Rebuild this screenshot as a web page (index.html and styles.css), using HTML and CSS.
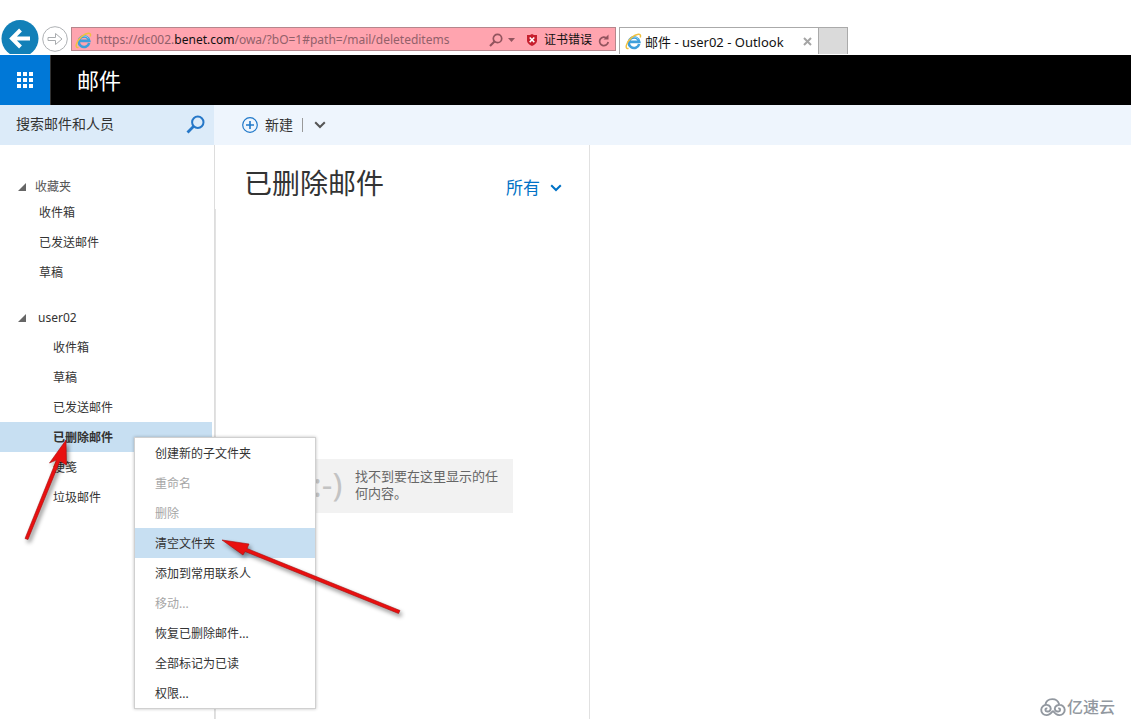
FILE: index.html
```html
<!DOCTYPE html>
<html lang="zh-CN">
<head>
<meta charset="utf-8">
<title>邮件 - user02 - Outlook</title>
<link rel="stylesheet" href="styles.css">
</head>
<body>
<svg class="defs" width="0" height="0" aria-hidden="true">
  <symbol id="ie" viewBox="0 0 17 17">
    <path d="M14.200 11A5.300 5.300 0 1 1 14.300 8.900H5" fill="none" stroke="#3d9fdc" stroke-width="2.600"/>
    <path d="M13.300 6.500A5 5 0 0 0 4.500 6.500" fill="none" stroke="#8ad4f5" stroke-width="1"/>
    <path d="M3.500 15.200C-0.500 16.800 0.800 9.600 6.500 4.600C11.300 0.500 16.800-0.200 15.300 4.400" fill="none" stroke="#efc040" stroke-width="1.500"/>
  </symbol>
  <symbol id="chevron" viewBox="0 0 12 8">
    <path d="M1.200 1.200L6 6L10.800 1.200" fill="none" stroke="currentColor" stroke-width="2"/>
  </symbol>
</svg>

<div class="browser">
  <button class="back" aria-label="后退">
    <svg width="38" height="34" viewBox="0 0 38 34"><circle cx="19" cy="18.500" r="18.500" fill="#1280b8"/><path d="M29 18.500H12M19.500 10L11 18.500L19.500 27" fill="none" stroke="#fff" stroke-width="4"/></svg>
  </button>
  <button class="forward" aria-label="前进">
    <svg width="26" height="26" viewBox="0 0 26 26"><circle cx="13" cy="13" r="12.300" fill="#fff" stroke="#aeb1b4"/><path d="M6 11.500H13.500V7.500L20 13L13.500 18.500V14.500H6Z" fill="none" stroke="#a9acaf"/></svg>
  </button>
  <div class="address">
    <svg width="17" height="17"><use href="#ie"/></svg>
    <a class="url" href="#">https://dc002.<b>benet.com</b>/owa/?bO=1#path=/mail/deleteditems</a>
    <button aria-label="搜索"><svg width="14" height="14" viewBox="0 0 14 14"><circle cx="8.500" cy="5.500" r="4.200" fill="none" stroke="#92545e" stroke-width="1.700"/><path d="M5.500 8.500L1 13" stroke="#92545e" stroke-width="2.200"/></svg></button>
    <button class="drop" aria-label="历史记录"><svg width="7" height="4"><path d="M0 0H7L3.500 4Z" fill="#92545e"/></svg></button>
    <button class="cert"><svg width="12" height="12" viewBox="0 0 12 12"><path d="M6 0L8 1L11 1V7Q10.500 10 6 12Q1.500 10 1 7V1L4 1Z" fill="#c61f2e"/><path d="M3.700 3.500L8.300 8.100M8.300 3.500L3.700 8.100" stroke="#fff" stroke-width="1.500"/></svg>证书错误</button>
    <button aria-label="刷新"><svg width="12" height="13" viewBox="0 0 12 13"><path d="M9 4.300A4.300 4.300 0 1 0 10.200 8" fill="none" stroke="#92545e" stroke-width="1.700"/><path d="M10.500 0.500V5.500H5.500Z" fill="#92545e"/></svg></button>
  </div>
  <div class="tab">
    <svg width="17" height="17"><use href="#ie"/></svg>
    <span class="tab-title">邮件 - user02 - Outlook</span>
    <button aria-label="关闭标签"><svg width="9" height="9" viewBox="0 0 9 9"><path d="M1 1L8 8M8 1L1 8" stroke="#a5a5a5" stroke-width="2"/></svg></button>
  </div>
  <button class="new-tab" aria-label="新建标签"></button>
</div>

<header class="header">
  <button class="launcher" aria-label="应用启动器">
    <svg width="16" height="16" viewBox="0 0 16 16" fill="#fff"><path d="M0 0h4v4H0zM6 0h4v4H6zM12 0h4v4h-4zM0 6h4v4H0zM6 6h4v4H6zM12 6h4v4h-4zM0 12h4v4H0zM6 12h4v4H6zM12 12h4v4h-4z"/></svg>
  </button>
  <span class="app-name">邮件</span>
</header>

<div class="toolbar">
  <div class="search">
    <input type="text" aria-label="搜索邮件和人员" placeholder="搜索邮件和人员">
    <button aria-label="搜索"><svg width="19" height="19" viewBox="0 0 19 19"><circle cx="11.800" cy="7.200" r="5.700" fill="none" stroke="#2577c8" stroke-width="2"/><path d="M7.700 11.300L1.500 17.500" stroke="#2577c8" stroke-width="2.800"/></svg></button>
  </div>
  <button class="new"><svg width="16" height="16" viewBox="0 0 16 16"><circle cx="8" cy="8" r="7.300" fill="none" stroke="#1f78c9" stroke-width="1.200"/><path d="M8 4V12M4 8H12" stroke="#1f78c9" stroke-width="1.600"/></svg>新建</button>
  <span class="separator"></span>
  <button class="more" aria-label="更多"><svg width="12" height="8"><use href="#chevron"/></svg></button>
</div>

<div class="workspace">
  <nav class="sidebar">
    <button class="group favorites"><svg width="8" height="8"><path d="M8 0V8H0Z" fill="#666"/></svg>收藏夹</button>
    <ul class="folders">
      <li><a href="#">收件箱</a></li>
      <li><a href="#">已发送邮件</a></li>
      <li><a href="#">草稿</a></li>
    </ul>
    <button class="group account"><svg width="8" height="8"><path d="M8 0V8H0Z" fill="#666"/></svg>user02</button>
    <ul class="folders nested">
      <li><a href="#">收件箱</a></li>
      <li><a href="#">草稿</a></li>
      <li><a href="#">已发送邮件</a></li>
      <li><a class="selected" href="#">已删除邮件</a></li>
      <li><a href="#">便笺</a></li>
      <li><a href="#">垃圾邮件</a></li>
    </ul>
  </nav>
  <div class="rail"></div>
  <section class="list">
    <div class="list-head">
      <h1>已删除邮件</h1>
      <button class="filter">所有<svg width="12" height="8"><use href="#chevron"/></svg></button>
    </div>
    <div class="empty">
      <span class="face">:-)</span>
      <p>找不到要在这里显示的任何内容。</p>
    </div>
  </section>
  <main class="reading"></main>
</div>

<div class="menu" role="menu">
  <button role="menuitem">创建新的子文件夹</button>
  <button role="menuitem" disabled>重命名</button>
  <button role="menuitem" disabled>删除</button>
  <button role="menuitem" class="active">清空文件夹</button>
  <button role="menuitem">添加到常用联系人</button>
  <button role="menuitem" disabled>移动...</button>
  <button role="menuitem">恢复已删除邮件...</button>
  <button role="menuitem">全部标记为已读</button>
  <button role="menuitem">权限...</button>
</div>

<svg class="arrows" width="420" height="640" viewBox="0 0 420 640" aria-hidden="true">
  <g fill="#e81010" stroke="#a80c0c" stroke-width=".6">
    <path d="M66 440L66.500 465L60 461L28 539.500L25 538.500L56.500 460L49.500 463Z"/>
    <path d="M222 540L249 544L247 548.500L400 610.500L398.500 613.500L245 551.500L243 555Z"/>
  </g>
</svg>

<div class="brand">
  <svg width="26" height="19" viewBox="0 0 27 20" fill="none" stroke="#9298a0" stroke-width="2"><path d="M13.500 13.500C11 16.500 9.500 18 6.800 18A5.400 5.400 0 1 1 7.500 7.300C10.500 7.500 12 11 10.500 13C9 15 5.500 14.500 5.500 12.500C5.500 11.300 6.500 10.800 7.500 11.200M5.500 7.300C6 3.500 9 1.200 12.800 1.200C16.500 1.200 19 3.300 20 6.500M13.500 13.500C15.500 16.500 17 18 20 18A5.400 5.400 0 1 0 19.500 7.300C16 7.500 14.500 11 16 13C17.500 15 21 14.500 21 12.500C21 11.300 20 10.800 19 11.200"/></svg>
  <span>亿速云</span>
</div>
</body>
</html>
```
FILE: styles.css
```css
* { box-sizing: border-box; }

body {
  margin: 0;
  min-height: 100vh;
  display: flex;
  flex-direction: column;
  position: relative;
  background: #fff;
  color: #333;
  font: 12px/18px "Noto Sans", "Noto Sans CJK SC", sans-serif;
}

button, input {
  margin: 0;
  padding: 0;
  border: 0;
  background: none;
  color: inherit;
  font: inherit;
}

button { display: flex; align-items: center; }
svg { display: block; flex: none; }
a { color: inherit; text-decoration: none; }
ul { margin: 0; padding: 0; list-style: none; }
.defs { position: absolute; }

.browser {
  display: flex;
  align-items: flex-end;
  height: 55px;
  padding-bottom: 1px;
}
.back { margin-left: 1px; }
.forward { margin: 0 3px 2px; }
.address {
  display: flex;
  align-items: center;
  flex: none;
  width: 545px;
  height: 24px;
  margin-bottom: 3px;
  padding: 2px 5px 0 3px;
  border: 1px solid #b5868c;
  background: #ffa4af;
}
.url { flex: 1; margin-left: 4px; color: #92606a; }
.url b { color: #111; font-weight: 400; }
.drop { margin: 0 11px 0 5px; }
.cert { gap: 6px; margin-right: 6px; color: #111; }
.tab {
  display: flex;
  align-items: center;
  flex: none;
  width: 200px;
  height: 27px;
  margin-left: 3px;
  padding: 0 6px 0 5px;
  border: 1px solid #aaa;
  border-bottom: 0;
}
.tab-title { flex: 1; margin-left: 3px; padding-top: 1px; color: #111; font-size: 13px; }
.new-tab {
  width: 30px;
  height: 27px;
  margin-left: -1px;
  border: 1px solid #aaa;
  border-bottom: 0;
  background: #dadada;
}

.header {
  display: flex;
  align-items: center;
  height: 50px;
  background: #000;
  color: #fff;
}
.launcher {
  justify-content: center;
  width: 51px;
  height: 50px;
  border-right: 1px solid #333;
  background: #0078d7;
}
.app-name { margin-left: 26px; font-size: 22px; line-height: 30px; }

.toolbar {
  display: flex;
  align-items: center;
  height: 40px;
  background: #eef5fd;
  font-size: 14px;
  line-height: 20px;
}
.search {
  display: flex;
  align-items: center;
  align-self: stretch;
  width: 214px;
  padding: 0 9px 2px 16px;
  background: #dcebf9;
}
.search input { flex: 1; min-width: 0; outline: 0; }
.search input::placeholder { color: #333; opacity: 1; }
.new { gap: 7px; margin-left: 28px; }
.separator { width: 1px; height: 14px; margin: 0 11px 0 9px; background: #999; }
.more { color: #555; }

.workspace { display: flex; flex: 1; }
.sidebar { width: 214px; padding: 31px 2px 0 0; }
.group { gap: 12px; width: 100%; padding-left: 18px; }
.favorites { gap: 9px; height: 21px; color: #555; }
.account { height: 30px; margin-top: 15px; padding-top: 2px; }
.folders a { display: block; padding: 2px 0 0 39px; line-height: 28px; }
.folders.nested a { padding-left: 53px; }
.folders .selected { background: #c7dff2; font-weight: 700; }
.rail {
  width: 2px;
  border-left: 1px solid #ddd;
  background: linear-gradient(#fff 64px, #e2e2e2 64px);
}

.list { width: 374px; border-right: 1px solid #e1e1e1; }
.list-head {
  display: flex;
  justify-content: space-between;
  padding: 18px 27px 0 28px;
}
h1 { margin: 0; font-size: 28px; line-height: 40px; font-weight: 400; }
.filter { gap: 10px; padding-top: 10px; color: #0072c6; font-size: 17px; line-height: 24px; }
.empty {
  display: flex;
  align-items: center;
  height: 54px;
  margin: 256px 76px 0 75px;
  padding: 0 14px 2px 22px;
  background: #f2f2f2;
  color: #666;
}
.face { width: 42px; color: #c3c3c3; font-size: 33px; line-height: 40px; }
.empty p { flex: 1; margin: 0; font-size: 13px; line-height: 17px; }
.reading { flex: 1; }

.menu {
  position: absolute;
  left: 134px;
  top: 437px;
  width: 182px;
  border: 1px solid #d0d0d0;
  background: #fff;
  box-shadow: 0 0 3px rgba(0, 0, 0, .25);
}
.menu button { width: 100%; height: 30px; padding: 2px 0 0 20px; }
.menu button:disabled { color: #a6a6a6; }
.menu .active { background: #c7dff2; }

.arrows {
  position: absolute;
  left: 0;
  top: 0;
  pointer-events: none;
  filter: drop-shadow(2px 3px 2px rgba(0, 0, 0, .45));
}

.brand {
  position: absolute;
  right: 16px;
  bottom: 0;
  display: flex;
  align-items: center;
  gap: 1px;
  color: #9298a0;
  font-size: 16px;
  font-weight: 500;
  line-height: 24px;
}
```
